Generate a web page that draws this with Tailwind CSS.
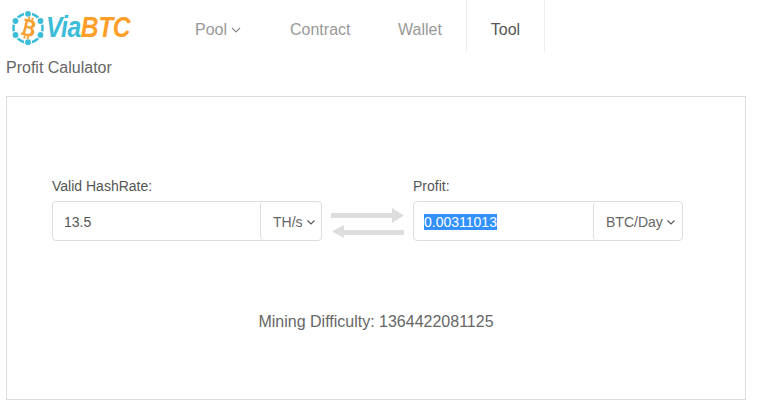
<!DOCTYPE html>
<html lang="en">
  <head>
    <meta charset="UTF-8" />
    <title>ViaBTC Profit Calculator</title>
    <script src="https://cdn.jsdelivr.net/npm/@tailwindcss/browser@4"></script>
  </head>
  <body class="bg-white font-['Liberation_Sans',Arial,sans-serif] text-[#666] w-[758px] h-[407px] overflow-hidden">
    <!-- header -->
    <header class="flex h-[52px]">
      <div class="flex items-center w-[174px] pl-[10px] pt-[3px] shrink-0">
        <svg width="36" height="36" viewBox="0 0 36 36" class="shrink-0">
          <circle cx="18" cy="18" r="14.500" fill="none" stroke="#3dbcd8" stroke-width="2.500" />
          <g fill="#3dbcd8" stroke="#fff" stroke-width="1.200">
            <circle cx="18" cy="3.800" r="3.500" />
            <circle cx="5.500" cy="11" r="3.500" />
            <circle cx="30.500" cy="11" r="3.500" />
            <circle cx="5.500" cy="25" r="3.500" />
            <circle cx="30.500" cy="25" r="3.500" />
            <circle cx="18" cy="32.200" r="3.500" />
          </g>
          <g transform="rotate(14 18 18)">
            <path d="M12.500 9.500h7c3 0 4.700 1.700 4.700 4 0 1.800-1 3.100-2.500 3.600 2.100.4 3.500 2 3.500 4.200 0 2.900-2.200 4.700-5.300 4.700h-7.400v-2.300h1.500V11.800h-1.500zM16.500 11.900v4.200h2.300c1.300 0 2.100-.8 2.100-2.100s-.8-2.100-2.100-2.100zM16.500 18.400v5.300h2.800c1.500 0 2.400-1 2.400-2.700s-.9-2.600-2.400-2.600z" fill="#f7a033" fill-rule="evenodd" />
            <path d="M15.800 6.800h1.900v3h-1.900zM19.200 6.800h1.900v3h-1.900zM15.800 26h1.900v3h-1.900zM19.200 26h1.900v3h-1.900z" fill="#f7a033" />
          </g>
        </svg>
        <span class="ml-0 text-[29px] font-bold italic tracking-[-0.5px] leading-none text-[#3dbcd8] scale-x-[.85] origin-left">Via<span class="text-[#ff9f2a]">BTC</span></span>
      </div>
      <nav class="flex text-base text-[#999]">
        <a class="flex items-center pl-[21px] w-[92px] pt-[7px]">
          Pool
          <svg width="10" height="6" viewBox="0 0 10 6" class="ml-[4px] mt-[1px]"><path d="M1 1l4 4 4-4" fill="none" stroke="#888" stroke-width="1.100" /></svg>
        </a>
        <a class="flex items-center pl-[24px] w-[108px] pt-[7px]">Contract</a>
        <a class="flex items-center pl-[24px] w-[92px] pt-[7px]">Wallet</a>
        <a class="flex items-center justify-center w-[79px] pt-[7px] border-x border-[#eee] text-[#555]">Tool</a>
      </nav>
    </header>

    <h1 class="pl-[6px] mt-[6px] text-base leading-5 font-normal text-[#666]">Profit Calulator</h1>

    <!-- calculator -->
    <main class="ml-[6px] mt-[18px] w-[740px] h-[304px] border border-[#ddd] pl-[45px] pt-[81px]">
      <div class="flex items-end">
        <div class="w-[270px]">
          <label class="block text-sm leading-4 mb-[7px] text-[#555]">Valid HashRate:</label>
          <div class="flex h-[40px] border border-[#ddd] rounded-[4px]">
            <input value="13.5" class="flex-1 min-w-0 px-[11px] pt-[2px] text-sm text-[#555] outline-none" />
            <div class="flex items-center w-[61px] pl-[12px] pt-[2px] shrink-0 border-l border-[#ddd] rounded-[4px] text-sm">
              TH/s
              <svg width="8" height="5" viewBox="0 0 8 5" class="ml-[4px]"><path d="M.5.5L4 4 7.500.5" fill="none" stroke="#555" stroke-width="1.100" /></svg>
            </div>
          </div>
        </div>
        <svg width="74" height="40" viewBox="0 0 74 40" class="ml-[9px] mr-[8px] shrink-0">
          <path d="M0 12h61V7l12 7.500-12 7.500v-5H0z" fill="#ddd" />
          <path d="M73 29H13v-5L1 30.500 13 37v-3h60z" fill="#ddd" />
        </svg>
        <div class="w-[270px]">
          <label class="block text-sm leading-4 mb-[7px] text-[#555]">Profit:</label>
          <div class="flex h-[40px] border border-[#ddd] rounded-[4px]">
            <div class="flex-1 min-w-0 flex items-center pl-[10px] pt-[2px] text-sm">
              <span class="bg-[#3390ff] text-white leading-[16px]">0.00311013</span>
            </div>
            <div class="flex items-center w-[89px] pl-[12px] pt-[2px] shrink-0 border-l border-[#ddd] rounded-[4px] text-sm">
              BTC/Day
              <svg width="8" height="5" viewBox="0 0 8 5" class="ml-[4px]"><path d="M.5.5L4 4 7.500.5" fill="none" stroke="#555" stroke-width="1.100" /></svg>
            </div>
          </div>
        </div>
      </div>
      <p class="mt-[71px] mr-[45px] text-center text-base leading-5 text-[#666]">Mining Difficulty: 1364422081125</p>
    </main>
  </body>
</html>
